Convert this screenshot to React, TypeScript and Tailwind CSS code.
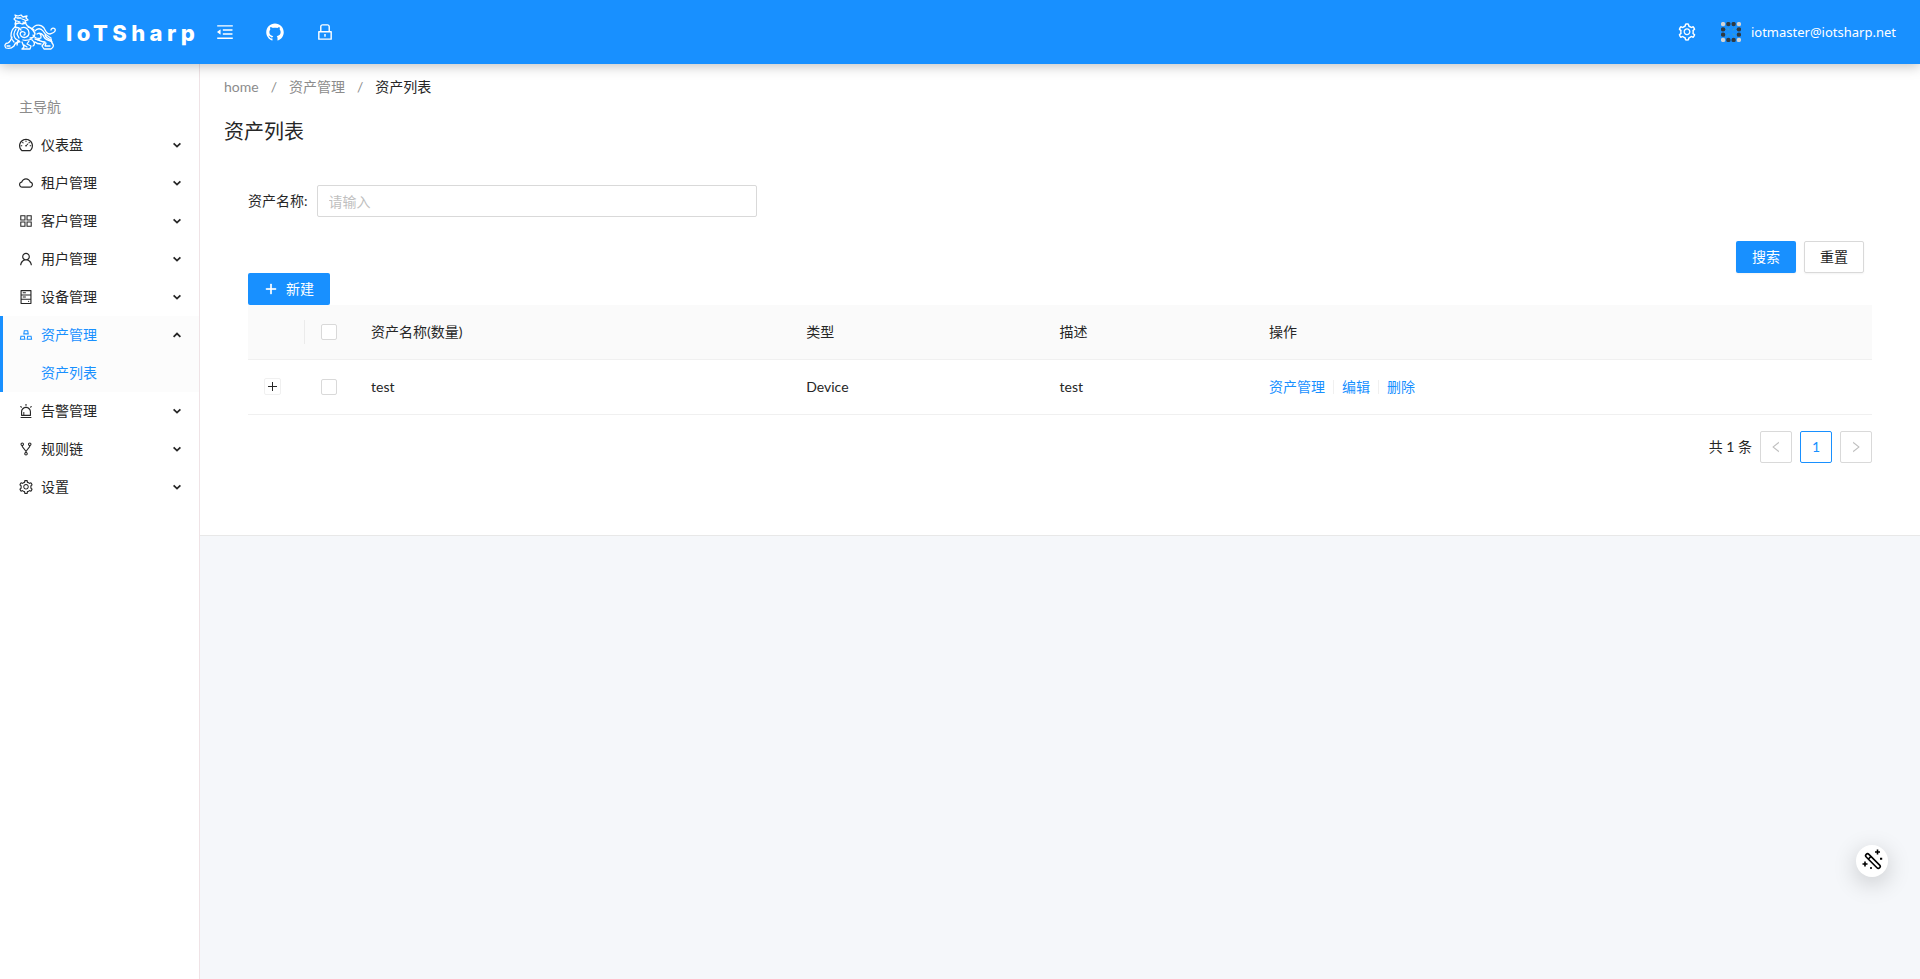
import type { ReactNode } from "react"
import type { IconType } from "react-icons"
import {
  AiFillGithub,
  AiOutlineAlert,
  AiOutlineAppstore,
  AiOutlineCloud,
  AiOutlineDashboard,
  AiOutlineFork,
  AiOutlineGold,
  AiOutlineHdd,
  AiOutlineLeft,
  AiOutlineLock,
  AiOutlineMenuFold,
  AiOutlinePlus,
  AiOutlineRight,
  AiOutlineSetting,
  AiOutlineUser,
} from "react-icons/ai"

interface MenuItem {
  text: string
  icon: IconType
  children?: string[]
}

const menu: MenuItem[] = [
  { text: "仪表盘", icon: AiOutlineDashboard },
  { text: "租户管理", icon: AiOutlineCloud },
  { text: "客户管理", icon: AiOutlineAppstore },
  { text: "用户管理", icon: AiOutlineUser },
  { text: "设备管理", icon: AiOutlineHdd },
  { text: "资产管理", icon: AiOutlineGold, children: ["资产列表"] },
  { text: "告警管理", icon: AiOutlineAlert },
  { text: "规则链", icon: AiOutlineFork },
  { text: "设置", icon: AiOutlineSetting },
]

const assets = [{ name: "test", type: "Device", description: "test" }]

function BeastLogo() {
  return (
    <svg className="h-9 w-13 shrink-0" viewBox="0 0 52 36" fill="none" stroke="white" strokeWidth="1.3" strokeLinecap="round" strokeLinejoin="round">
      {/* head and mane */}
      <path d="M11 1l3 1 3-1 2 2 4-1-1 2 2 2-3 1 1 2-4 1-3-1-4 1 1-3-2-2 2-2zM13 4h4M18 5l3 1M13 7l3 1M19 8l2 1M12 10l-1 3 4 1 2 2" />
      {/* neck, chest and back */}
      <path d="M11 13c-3 2-4 5-4 9 0 3 1 4 3 6M12 15c-2 3-3 6-1 9 1 2 4 2 5 4M22 10c1 3 5 3 8 6M17 14c4-2 8 1 8 5s-5 6-8 3c-2-3 0-5 3-4 2 1 1 3 0 3M15 15l-2 5 2 4M24 13c4 1 6 4 7 7M26 24c3 0 5-2 5-5M19 26c3 1 6 0 9-1" />
      {/* haunch and tail */}
      <path d="M28 15c3-5 9-5 12-1 2 4 3 6 6 6 4-1 6-3 5-5-2-2-4 0-4 1M31 17c2-3 6-3 8 0 2 4 5 5 8 7M33 20c3-2 6 0 7 3 1 3 5 3 8 5M29 21c1 3 5 4 8 3M36 20c2 2 1 5-2 6M41 21c1 3 4 4 6 5" />
      {/* paws */}
      <path d="M8 23c-1 3-2 5-4 6-3 0-4 3-2 5 3 1 6 0 8-2 1-3 3-4 5-4M3 32h3M18 28l2 5-2 2h8l1-3-4-2 2-3M20 31l3 2M28 26c3 2 3 5 1 6M31 25c4 1 7 3 10 3l-3 4 2 3h7c3-2 3-4 1-6l-1-4M42 29l-1 3h5M14 27l-1 4M31 28c2 2 4 2 6 2" />
    </svg>
  )
}

const avatarDots = [
  [2, 2, 1], [7, 2, 0], [12, 2, 0], [17, 2, 1],
  [2, 7, 0], [17, 7, 0], [2, 12, 0], [17, 12, 0],
  [2, 17, 1], [7, 17, 0], [12, 17, 0], [17, 17, 1],
]

function Avatar() {
  return (
    <svg className="size-5" viewBox="0 0 19 19">
      {avatarDots.map(([x, y, pale]) => (
        <circle key={`${x}-${y}`} cx={x} cy={y} r="2.1" fill={pale ? "#d0d4d8" : "#2f3a42"} />
      ))}
      <path d="M6 6l2 2M13 6l-2 2M6 13l2-2M13 13l-2-2" stroke="#3f9fc4" strokeWidth="1" />
    </svg>
  )
}

function Caret({ open }: { open?: boolean }) {
  return (
    <svg className="size-2" viewBox="0 0 8 8" fill="none" stroke="#262626" strokeWidth="1.8">
      <path d={open ? "M.6 5.8L4 2.6l3.4 3.2" : "M.6 2.4L4 5.6l3.4-3.2"} />
    </svg>
  )
}

function Header() {
  return (
    <header className="relative z-10 flex h-16 items-center bg-[#1890ff] text-white shadow-[0_2px_12px_rgba(0,0,0,0.25)]">
      <a href="#" className="flex w-50 items-center gap-2.5 pl-1">
        <BeastLogo />
        <span className="pt-0.5 font-[Inter,sans-serif] text-[22px] leading-8 font-extrabold tracking-[0.2em]">IoTSharp</span>
      </a>
      <nav className="flex items-center text-xl">
        <button type="button" aria-label="Toggle menu" className="flex w-[50px] items-center justify-center">
          <AiOutlineMenuFold />
        </button>
        <a href="#" aria-label="GitHub" className="flex w-[50px] items-center justify-center">
          <AiFillGithub />
        </a>
        <button type="button" aria-label="Lock" className="flex w-[50px] items-center justify-center">
          <AiOutlineLock />
        </button>
      </nav>
      <div className="ml-auto flex items-center pr-6">
        <button type="button" aria-label="Settings" className="mr-6 text-xl">
          <AiOutlineSetting />
        </button>
        <button type="button" className="flex items-center gap-2.5">
          <Avatar />
          <span className="font-['Noto_Sans',sans-serif] text-[13px]">iotmaster@iotsharp.net</span>
        </button>
      </div>
    </header>
  )
}

function Sidebar() {
  return (
    <aside className="w-50 shrink-0 border-r border-[#efe3e6] bg-white pt-6">
      <p className="flex h-[38px] items-center pl-[19px] text-[#8c8c8c]">主导航</p>
      <ul>
        {menu.map(({ text, icon: Icon, children }) => (
          <li key={text} className={children ? "border-l-3 border-[#1890ff] bg-[#fcfcfc]" : "border-l-3 border-transparent"}>
            <button type="button" className="flex h-[38px] w-full items-center gap-[7px] pr-[18px] pl-[15px]">
              <Icon className={children ? "size-4 text-[#1890ff]" : "size-4"} />
              <span className={children ? "text-[#1890ff]" : ""}>{text}</span>
              <span className="ml-auto">
                <Caret open={!!children} />
              </span>
            </button>
            {children?.map((child) => (
              <a key={child} href="#" className="flex h-[38px] items-center pl-[38px] text-[#1890ff]">
                {child}
              </a>
            ))}
          </li>
        ))}
      </ul>
    </aside>
  )
}

function PageButton({ label, active, children }: { label: string; active?: boolean; children: ReactNode }) {
  return (
    <button
      type="button"
      aria-label={label}
      className={
        active
          ? "flex size-8 items-center justify-center rounded-xs border border-[#1890ff] text-[#1890ff]"
          : "flex size-8 items-center justify-center rounded-xs border border-[#d9d9d9] text-sm text-[#bfbfbf]"
      }
    >
      {children}
    </button>
  )
}

function Checkbox({ label }: { label: string }) {
  return (
    <input type="checkbox" aria-label={label} className="block size-4 appearance-none rounded-xs border border-[#d9d9d9] bg-white" />
  )
}

function AssetTable() {
  return (
    <table className="w-full table-fixed text-left">
      <colgroup>
        <col className="w-[57px]" />
        <col className="w-[50px]" />
        <col className="w-[26.8%]" />
        <col className="w-[15.6%]" />
        <col className="w-[12.9%]" />
        <col />
      </colgroup>
      <thead>
        <tr className="h-[54px] border-b border-[#f0f0f0] bg-[#fafafa]">
          <th>
            <div className="h-6 border-r border-[#ebebeb]" />
          </th>
          <th className="px-4">
            <Checkbox label="全选" />
          </th>
          <th className="px-4 font-normal">资产名称(数量)</th>
          <th className="px-4 font-normal">类型</th>
          <th className="px-4 font-normal">描述</th>
          <th className="px-4 font-normal">操作</th>
        </tr>
      </thead>
      <tbody>
        {assets.map((asset) => (
          <tr key={asset.name} className="h-[55px] border-b border-[#f0f0f0]">
            <td className="px-4">
              <button type="button" aria-label="展开" className="flex size-[17px] items-center justify-center rounded-xs border border-[#f0f0f0]">
                <svg className="size-[9px]" viewBox="0 0 9 9" stroke="#262626">
                  <path d="M0 4.5h9M4.5 0v9" />
                </svg>
              </button>
            </td>
            <td className="px-4">
              <Checkbox label={asset.name} />
            </td>
            <td className="px-4">{asset.name}</td>
            <td className="px-4">{asset.type}</td>
            <td className="px-4">{asset.description}</td>
            <td className="px-4">
              <div className="flex items-center gap-2 text-[#1890ff]">
                <a href="#">资产管理</a>
                <span className="h-3.5 w-px bg-[#f0f0f0]" />
                <a href="#">编辑</a>
                <span className="h-3.5 w-px bg-[#f0f0f0]" />
                <a href="#">删除</a>
              </div>
            </td>
          </tr>
        ))}
      </tbody>
    </table>
  )
}

export default function App() {
  return (
    <div className="flex min-h-screen flex-col bg-[#f5f7fa] font-[Lato,'Noto_Sans_CJK_SC',sans-serif] text-sm text-[#262626]">
      <Header />
      <div className="flex grow">
        <Sidebar />
        <main className="grow">
          <section className="border-b border-[#e8e8e8] bg-white px-6 pb-[72px]">
            <nav className="flex gap-3 pt-3 leading-[22px] text-[#8c8c8c]">
              <a href="#">home</a>
              <span>/</span>
              <a href="#">资产管理</a>
              <span>/</span>
              <span className="text-[#262626]">资产列表</span>
            </nav>
            <h1 className="mt-[17px] text-xl leading-8">资产列表</h1>
            <div className="px-6 pt-[38px]">
              <form>
                <div className="flex items-center gap-[9px]">
                  <label htmlFor="asset-name">资产名称:</label>
                  <input
                    id="asset-name"
                    type="text"
                    placeholder="请输入"
                    className="h-8 w-[27.1%] rounded-xs border border-[#d9d9d9] px-[11px] placeholder:text-[#bfbfbf]"
                  />
                </div>
                <div className="mt-6 flex justify-end gap-2 pr-2">
                  <button type="button" className="h-8 rounded-xs bg-[#1890ff] px-4 text-white shadow-xs">
                    搜索
                  </button>
                  <button type="reset" className="h-8 rounded-xs border border-[#d9d9d9] px-[15px] shadow-xs">
                    重置
                  </button>
                </div>
              </form>
              <button type="button" className="flex h-8 items-center gap-2 rounded-xs bg-[#1890ff] px-4 text-white">
                <AiOutlinePlus className="size-3.5" strokeWidth="50" />
                新建
              </button>
              <AssetTable />
              <div className="mt-4 flex items-center justify-end gap-2">
                <span>共 1 条</span>
                <PageButton label="上一页">
                  <AiOutlineLeft />
                </PageButton>
                <PageButton label="1" active>
                  1
                </PageButton>
                <PageButton label="下一页">
                  <AiOutlineRight />
                </PageButton>
              </div>
            </div>
          </section>
        </main>
      </div>
      <button
        type="button"
        aria-label="Theme"
        className="fixed right-8 bottom-[102px] size-8 rounded-full bg-white shadow-[0_6px_24px_rgba(0,0,0,0.2)]"
      >
        <svg viewBox="0 0 32 32" fill="none" stroke="black" strokeWidth="1.6">
          <rect x="7.5" y="14.2" width="19" height="3.8" rx="1.9" transform="rotate(45 17 16)" />
          <path d="M12.200 14.200l2.800-2.800" />
          <path d="M21.500 4.500v5M19 7h5M9 16.500v5M6.500 19h5" />
          <path d="M24 13.700h2.200M14.200 23h1.600" strokeWidth="2" />
        </svg>
      </button>
    </div>
  )
}
